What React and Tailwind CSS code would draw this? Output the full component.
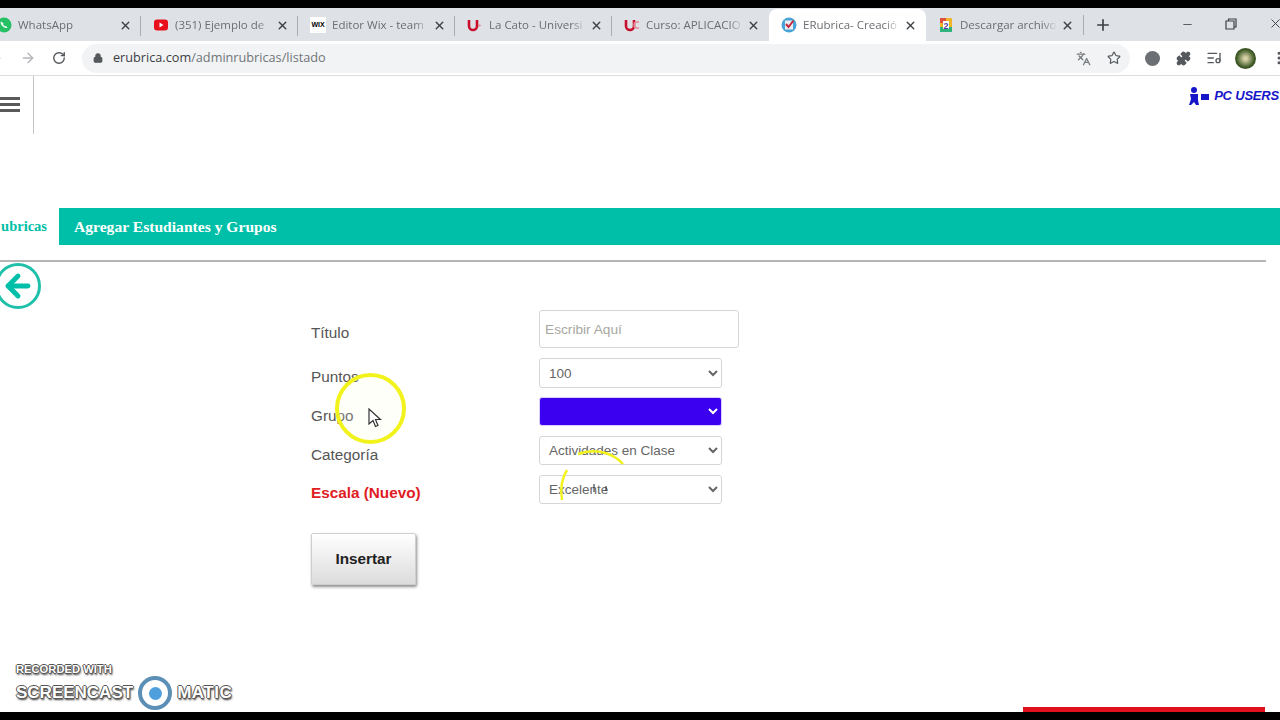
import React from "react";
import { X, Plus, ArrowRight, RotateCw, Lock, Star, Puzzle, ListMusic, EllipsisVertical, Minus, ArrowLeft, Languages } from "lucide-react";

const tabs = [
  { title: "WhatsApp", icon: "whatsapp" },
  { title: "(351) Ejemplo de", icon: "youtube" },
  { title: "Editor Wix - team", icon: "wix" },
  { title: "La Cato - Universi", icon: "uc" },
  { title: "Curso: APLICACIO", icon: "uc2" },
  { title: "ERubrica- Creació", icon: "rubrica", active: true },
  { title: "Descargar archivo", icon: "drive" },
];

function TabIcon({ type }) {
  if (type === "whatsapp") {
    return (
      <svg width="16" height="16" viewBox="0 0 16 16" className="shrink-0">
        <circle cx="8" cy="8" r="7.5" fill="#25c063" />
        <path d="M5 4.5c-1 1 0 3.500 2 5s3.500 2 4.500 1l-1.500-1.500-1 .5-2-2 .5-1z" fill="#fff" />
      </svg>
    );
  }
  if (type === "youtube") {
    return (
      <svg width="16" height="16" viewBox="0 0 16 16" className="shrink-0">
        <rect x="1" y="2.500" width="14" height="11" rx="3" fill="#e8101c" />
        <path d="M6.500 5.500v5l4-2.500z" fill="#fff" />
      </svg>
    );
  }
  if (type === "wix") {
    return (
      <div className="flex h-4 w-4 shrink-0 items-center justify-center bg-white text-[7px] font-bold text-black [font-family:'Liberation_Sans',sans-serif]">
        WIX
      </div>
    );
  }
  if (type === "uc" || type === "uc2") {
    return (
      <svg width="16" height="16" viewBox="0 0 16 16" className="shrink-0">
        <path d="M2 3v6a4 4 0 0 0 8 0V3" fill="none" stroke="#c8102e" strokeWidth="2.600" />
        {type === "uc" ? (
          <path d="M11.500 7l3 1.500-3 1.500z" fill="#e58a94" />
        ) : (
          <path d="M15 5h-2a3 3 0 0 0 0 6h2" fill="none" stroke="#e58a94" strokeWidth="1.500" />
        )}
      </svg>
    );
  }
  if (type === "rubrica") {
    return (
      <svg width="16" height="16" viewBox="0 0 16 16" className="shrink-0">
        <circle cx="8" cy="8" r="7.500" fill="#4aa3d8" />
        <rect x="4" y="3.500" width="8" height="9" fill="#e8eef2" />
        <path d="M5 7l2.500 3L12.500 3.500" fill="none" stroke="#c0263c" strokeWidth="2" />
      </svg>
    );
  }
  return (
    <svg width="16" height="16" viewBox="0 0 16 16" className="shrink-0">
      <rect x="2" y="1" width="12" height="14" rx="1" fill="#f0b429" />
      <rect x="2" y="1" width="6" height="5" fill="#e0503f" />
      <rect x="2" y="10" width="12" height="5" fill="#2fb37a" />
      <rect x="5" y="4" width="6" height="8" fill="#fff" />
      <text x="8" y="11.500" textAnchor="middle" fontSize="9" fontWeight="700" fill="#5540a8" fontFamily="Liberation Sans, sans-serif">2</text>
    </svg>
  );
}

function Tab({ tab, last }) {
  return (
    <div
      className={
        "relative flex h-full w-[157px] shrink-0 items-center pl-[12px] pr-[9px] " +
        (tab.active ? "rounded-t-lg bg-white" : "")
      }
    >
      <TabIcon type={tab.icon} />
      <span className="ml-[6px] flex-1 whitespace-nowrap text-[11.500px] text-[#6b6e72] [mask-image:linear-gradient(to_right,black_85%,transparent)]">
        {tab.title}
      </span>
      <X size={13} strokeWidth={2.600} className="ml-1 shrink-0 text-[#3c4043]" />
      {!tab.active && !last && <div className="absolute right-0 top-[7px] h-[20px] w-px bg-[#a9acb1]" />}
    </div>
  );
}

function BrowserChrome() {
  return (
    <div className="[font-family:'Open_Sans',sans-serif]">
      <div className="h-2 bg-black" />
      <div className="flex h-[33px] items-end bg-[#dee1e6]">
        <div className="-ml-4 flex h-full items-center pt-[1px]">
          {tabs.map((t, i) => (
            <Tab key={t.title} tab={t} last={i === 4 || i === 6} />
          ))}
          <div className="h-[20px] w-px bg-[#a9acb1]" />
          <Plus size={18} strokeWidth={2.200} className="ml-[10px] text-[#3c4043]" />
        </div>
        <div className="ml-auto flex h-full items-center text-[#3c4043]">
          <Minus size={13} strokeWidth={1.500} className="mr-[31px]" />
          <svg width="12" height="12" viewBox="0 0 12 12" className="mr-[31px] mb-[2px]">
            <path d="M3.500 3V1H11v8H9M1 3h8v8H1z" fill="none" stroke="#3c4043" strokeWidth="1.200" />
          </svg>
          <X size={15} strokeWidth={1.500} className="-mr-[3px] mb-[2px]" />
        </div>
      </div>
      <div className="flex h-[35px] items-center border-b border-[#dcdde0] bg-white">
        <div className="flex w-[36px] shrink-0 items-center">
          <ArrowLeft size={16} className="-ml-[13px] shrink-0 text-[#55585c]" />
          <ArrowRight size={16} className="ml-auto shrink-0 text-[#b3b5b8]" />
        </div>
        <RotateCw size={14} strokeWidth={2.400} className="ml-[16px] shrink-0 text-[#55585c]" />
        <div className="ml-[16px] flex h-[29px] flex-1 items-center rounded-full bg-[#f1f3f4] pl-[11px] text-[12.700px]">
          <Lock size={10} strokeWidth={3} className="fill-[#55585c] text-[#55585c]" />
          <span className="ml-[10px] text-[#3c4043]">erubrica.com</span>
          <span className="text-[#70757a]">/adminrubricas/listado</span>
          <div className="ml-auto flex items-center pr-[9px]">
            <Languages size={15} className="text-[#777a7e]" />
            <Star size={14} strokeWidth={2} className="ml-[16px] text-[#55585c]" />
          </div>
        </div>
        <div className="flex w-[150px] shrink-0 items-center">
          <div className="ml-[15px] h-[15px] w-[15px] shrink-0 rounded-full bg-[#6c6f73]" />
          <Puzzle size={15} className="ml-[16px] shrink-0 fill-[#55585c] text-[#55585c]" />
          <ListMusic size={16} className="ml-[15px] shrink-0 text-[#55585c]" />
          <div className="ml-[13px] h-[21px] w-[21px] shrink-0 rounded-full bg-[radial-gradient(circle,#d8d2a8_10%,#3f5a26_60%,#24331a)]" />
          <EllipsisVertical size={16} strokeWidth={2.500} className="ml-[15px] shrink-0 text-[#55585c]" />
        </div>
      </div>
    </div>
  );
}

function Field({ label, red, labelClass, children, className }) {
  return (
    <div className={"flex items-center " + (className || "")}>
      <label
        className={
          "w-[228px] shrink-0 text-[15.300px] leading-[20px] " +
          (red ? "font-bold text-[#e01b24] " : "text-[#555] ") +
          (labelClass || "")
        }
      >
        {label}
      </label>
      {children}
    </div>
  );
}

const selectClass =
  "h-[29px] w-[183px] rounded-[3px] border border-[#d6d6d6] bg-white pl-[5px] text-[13.500px] text-[#666] [font-family:'Liberation_Sans',sans-serif]";

function RubricaForm() {
  return (
    <form className="ml-[311px] flex w-[430px] flex-col [font-family:'Liberation_Sans',sans-serif]">
      <Field label="Título" labelClass="mt-[7px]">
        <input
          placeholder="Escribir Aquí"
          className="h-[38px] w-[200px] rounded-[3px] border border-[#d6d6d6] px-[5px] text-[13.700px] placeholder:text-[#a8a89f]"
        />
      </Field>
      <Field label="Puntos" className="mt-[10px]" labelClass="mt-[8px]">
        <select className="h-[30px] w-[183px] rounded-[3px] border border-[#d6d6d6] bg-white pl-[5px] text-[13.500px] text-[#666]" defaultValue="100">
          <option>100</option>
        </select>
      </Field>
      <Field label="Grupo" className="mt-[9px]" labelClass="mt-[9px]">
        <select className="h-[29px] w-[183px] rounded-[3px] border border-[#d8cdfb] bg-[#3c00f0] text-white">
          <option></option>
        </select>
      </Field>
      <Field label="Categoría" className="mt-[10px]" labelClass="mt-[8px]">
        <select className={selectClass}>
          <option>Actividades en Clase</option>
        </select>
      </Field>
      <Field label="Escala (Nuevo)" red className="mt-[10px]" labelClass="mt-[7px]">
        <select className={selectClass}>
          <option>Excelente</option>
        </select>
      </Field>
      <button
        type="button"
        className="mt-[29px] h-[52px] w-[105px] rounded-[2px] border border-[#cfcfcf] bg-gradient-to-b from-white to-[#dcdcdc] text-[15.300px] font-bold text-[#222] shadow-[1px_2px_3px_rgba(0,0,0,0.45)]"
      >
        Insertar
      </button>
    </form>
  );
}

function Watermark() {
  const outline =
    "text-white [text-shadow:1px_0_0_#555,-1px_0_0_#555,0_1px_0_#555,0_-1px_0_#555,1px_2px_2px_#333]";
  return (
    <div className="absolute bottom-[10px] left-[16px] [font-family:'Liberation_Sans',sans-serif]">
      <div className={"text-[11.200px] font-bold leading-[14px] " + outline}>RECORDED WITH</div>
      <div className="flex items-center">
        <span className={"text-[17px] font-bold leading-[30px] " + outline}>SCREENCAST</span>
        <div className="ml-[5px] flex h-[34px] w-[34px] items-center justify-center rounded-full border-[4px] border-[#5b8fb5] bg-white">
          <div className="h-[13px] w-[13px] rounded-full bg-[#4f9fdc]" />
        </div>
        <span className={"ml-[5px] text-[17px] font-bold leading-[30px] tracking-[0.5px] " + outline}>MATIC</span>
      </div>
    </div>
  );
}

export default function App() {
  return (
    <div className="relative flex h-[720px] w-[1280px] flex-col overflow-hidden bg-white">
      <BrowserChrome />

      {/* page header */}
      <div className="flex h-[132px] shrink-0 items-start">
        <div className="flex h-[58px] w-[34px] items-center border-r border-[#c4c4c4]">
          <div className="flex w-[20px] flex-col gap-[3px] pb-[2px]">
            <div className="h-[3px] bg-[#5a5a5a]" />
            <div className="h-[3px] bg-[#5a5a5a]" />
            <div className="h-[3px] bg-[#5a5a5a]" />
          </div>
        </div>
        <div className="ml-auto mt-[10px] flex items-center pr-[1px]">
          <svg width="24" height="20" viewBox="0 0 24 20">
            <circle cx="7" cy="4" r="3" fill="#1616c8" />
            <path d="M3 8h8v6l1 5H9l-2-3-3 3H2l2-6z" fill="#1616c8" />
            <rect x="14" y="8" width="8" height="6" fill="#1616c8" />
          </svg>
          <span className="ml-[3px] text-[13px] font-bold italic tracking-[-0.2px] text-[#1616c8] [font-family:'Liberation_Sans',sans-serif]">
            PC USERS
          </span>
        </div>
      </div>

      {/* teal nav */}
      <nav className="flex h-[37px] shrink-0 items-center bg-[#00bfa8] [font-family:'Liberation_Serif',serif] text-[15.600px] font-bold">
        <div className="flex h-full w-[59px] items-center justify-end bg-white pr-[12px] text-[14.500px] whitespace-nowrap text-[#00bfa8]">
          ubricas
        </div>
        <span className="ml-[15px] text-white">Agregar Estudiantes y Grupos</span>
      </nav>

      <div className="mt-[15px] h-[2px] w-[1266px] shrink-0 bg-[#b5b5b5]" />

      <div className="mt-[1px] flex h-[46px] w-[41px] shrink-0 items-center justify-end">
        <div className="flex h-[46px] w-[46px] shrink-0 items-center justify-center rounded-full border-[3px] border-[#1fc0aa]">
          <ArrowLeft size={34} strokeWidth={3.500} className="text-[#00bfa8]" />
        </div>
      </div>

      <div className="mt-[1px]">
        <RubricaForm />
      </div>

      <div className="absolute bottom-[8px] left-[1023px] h-[5px] w-[242px] bg-[#e0101c]" />
      <div className="absolute bottom-0 left-0 h-2 w-full bg-black" />

      {/* recording overlay: cursor highlight */}
      <div className="absolute left-[335px] top-[373px] h-[71px] w-[71px] rounded-full border-[4px] border-[#f2f21c] bg-[#ffffe8]/20" />
      <svg width="14" height="20" viewBox="0 0 14 20" className="absolute left-[368px] top-[408px]">
        <path d="M1 1v15l4-3.500 2.500 6 2.500-1-2.500-6h5z" fill="#fff" stroke="#333" strokeWidth="1.200" />
      </svg>
      <svg width="80" height="80" viewBox="0 0 80 80" className="absolute left-[550px] top-[440px]">
        <path d="M12 60C10 48 12 38 17 30" fill="none" stroke="#f2f21c" strokeWidth="2.500" />
        <path d="M28 14C44 8 62 12 73 24" fill="none" stroke="#f2f21c" strokeWidth="2.500" />
        <path d="M44 44v8M56 46v5" fill="none" stroke="#222" strokeWidth="1" />
      </svg>

      <Watermark />
    </div>
  );
}
